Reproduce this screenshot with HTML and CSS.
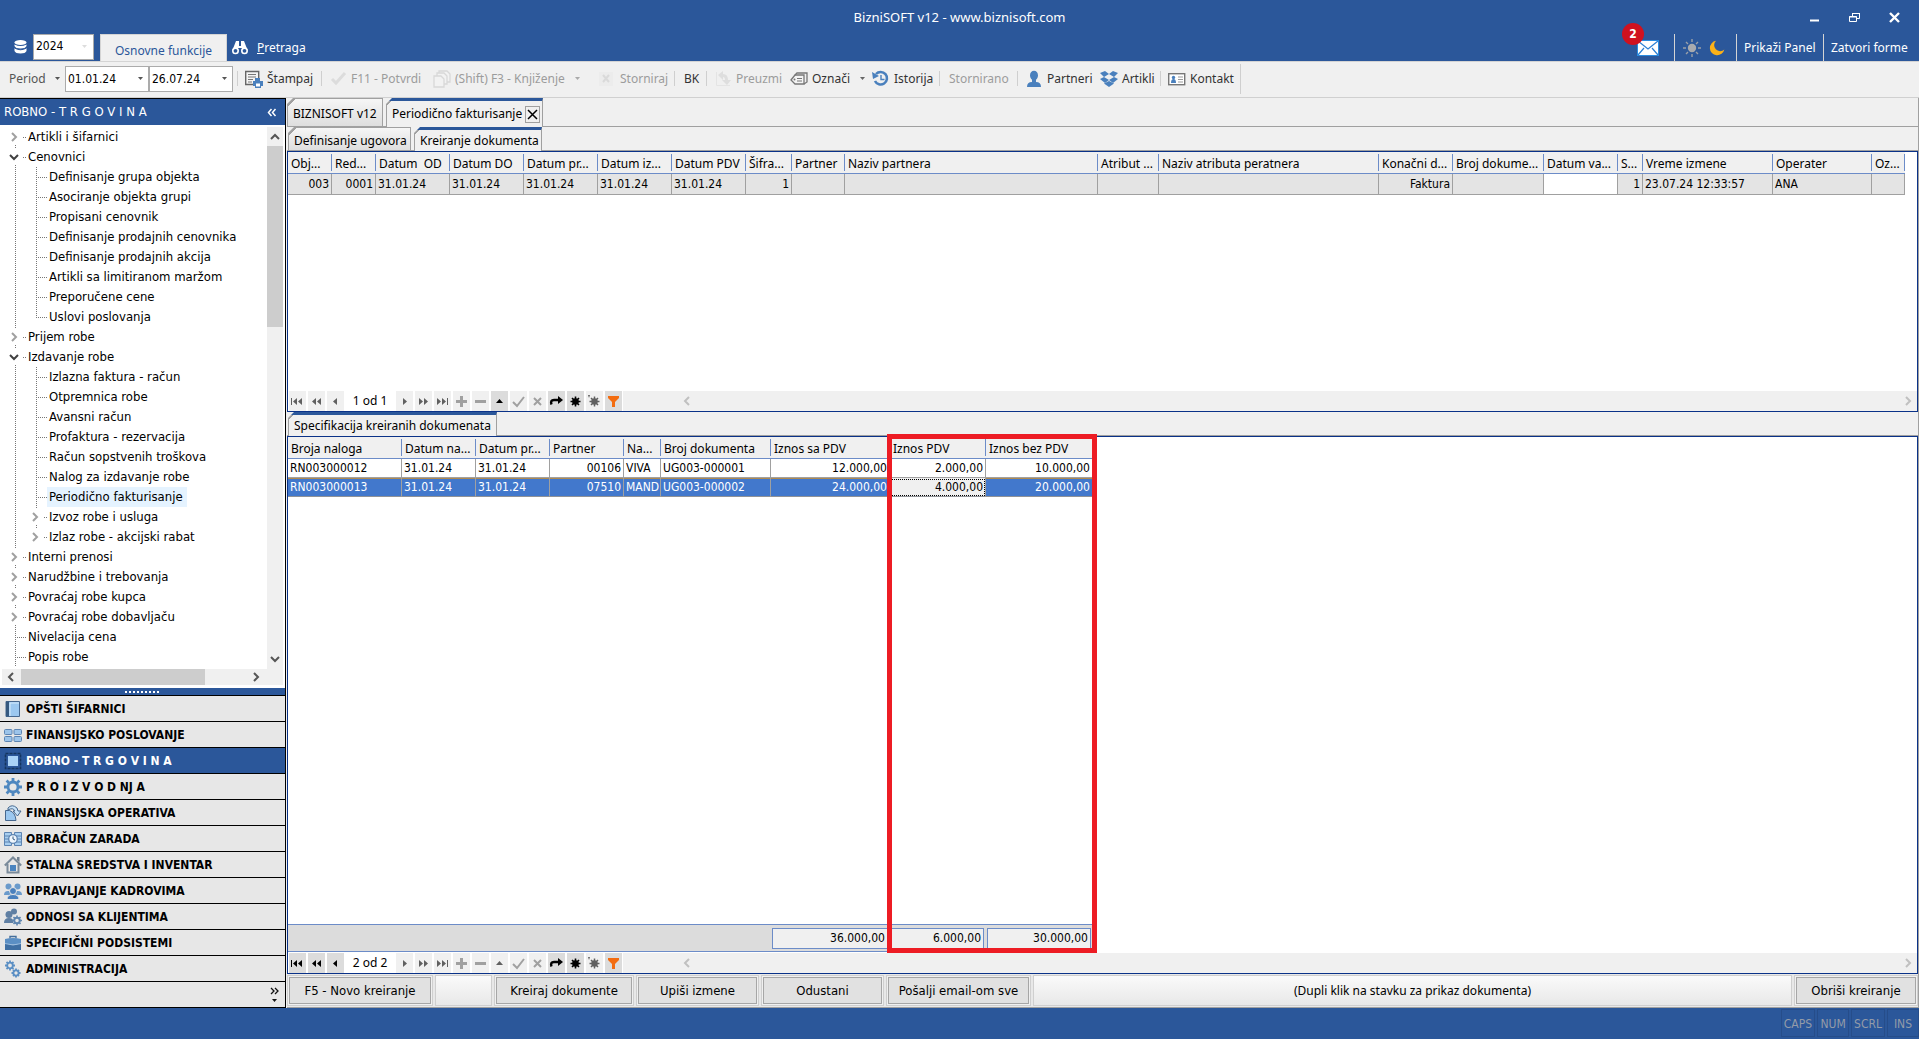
FILE: index.html
```html
<!DOCTYPE html>
<html lang="sr-Latn">
<head>
<meta charset="utf-8">
<title>BizniSOFT v12 - www.biznisoft.com</title>
<link rel="stylesheet" href="styles.css">
</head>
<body>
<svg class="sprite" aria-hidden="true">
  <symbol id="caret" viewBox="0 0 5 3"><path d="M0 0h5L2.500 3z" fill="currentColor"/></symbol>
  <symbol id="right" viewBox="0 0 10 10"><path d="M3 1l4 4-4 4" fill="none" stroke="currentColor" stroke-width="2"/></symbol>
  <symbol id="left" viewBox="0 0 10 10"><path d="M7 1L3 5l4 4" fill="none" stroke="currentColor" stroke-width="2"/></symbol>
  <symbol id="down" viewBox="0 0 10 10"><path d="M1 3l4 4 4-4" fill="none" stroke="currentColor" stroke-width="2"/></symbol>
  <symbol id="up" viewBox="0 0 10 10"><path d="M1 7l4-4 4 4" fill="none" stroke="currentColor" stroke-width="2"/></symbol>
  <symbol id="n-first" viewBox="0 0 17 19"><path d="M2 6h1v7H2zM8 6v7L4 9.500zM13 6v7L9 9.500z" fill="currentColor"/></symbol>
  <symbol id="n-pp" viewBox="0 0 17 19"><path d="M8 6v7L4 9.500zM13 6v7L9 9.500z" fill="currentColor"/></symbol>
  <symbol id="n-p" viewBox="0 0 17 19"><path d="M10 6v7L6 9.500z" fill="currentColor"/></symbol>
  <symbol id="n-n" viewBox="0 0 17 19"><path d="M7 6v7l4-3.500z" fill="currentColor"/></symbol>
  <symbol id="n-nn" viewBox="0 0 17 19"><path d="M4 6v7l4-3.500zM9 6v7l4-3.500z" fill="currentColor"/></symbol>
  <symbol id="n-last" viewBox="0 0 17 19"><path d="M3 6v7l4-3.500zM8 6v7l4-3.500zM13 6h1v7h-1z" fill="currentColor"/></symbol>
  <symbol id="n-plus" viewBox="0 0 17 19"><path d="M7 4h3v4h4v3h-4v4H7v-4H3V8h4z" fill="currentColor"/></symbol>
  <symbol id="n-minus" viewBox="0 0 17 19"><path d="M3 8h11v3H3z" fill="currentColor"/></symbol>
  <symbol id="n-up" viewBox="0 0 17 19"><path d="M5 11h7L8.500 7z" fill="currentColor"/></symbol>
  <symbol id="n-check" viewBox="0 0 17 19"><path d="M3 10l4 4 7-9" fill="none" stroke="currentColor" stroke-width="2"/></symbol>
  <symbol id="n-x" viewBox="0 0 17 19"><path d="M5 6l7 7M12 6l-7 7" fill="none" stroke="currentColor" stroke-width="2"/></symbol>
  <symbol id="n-redo" viewBox="0 0 17 19"><path d="M3.500 12.500Q2 8 6 8h5" fill="none" stroke="currentColor" stroke-width="2.400"/><path d="M10 4v8l5-4z" fill="currentColor"/></symbol>
  <symbol id="n-star" viewBox="0 0 17 19"><circle cx="8.500" cy="9.500" r="3.300" fill="currentColor"/><path d="M8.500 4.500v10M3.500 9.500h10M5 6l7 7M12 6l-7 7" stroke="currentColor" stroke-width="1.600"/></symbol>
  <symbol id="n-qstar" viewBox="0 0 17 19"><circle cx="8.500" cy="9.500" r="3.200" fill="currentColor"/><path d="M8.500 4.500v10M3.500 9.500h10M5 6l7 7M12 6l-7 7" stroke="currentColor" stroke-width="1.500"/><path d="M2 3h2L3 6z" fill="currentColor"/></symbol>
  <symbol id="n-filter" viewBox="0 0 17 19"><path d="M3 4h11v2l-4 4v5H7v-5L3 6z" fill="#f36c10"/></symbol>
</svg>

<header class="titlebar">
  <div class="title-row">
    <h1>BizniSOFT v12 - www.biznisoft.com</h1>
    <div class="win">
      <button aria-label="Minimize"><svg width="11" height="11"><path d="M1 8.500h9" stroke="#fff" stroke-width="2"/></svg></button>
      <button aria-label="Restore"><svg width="11" height="11"><path d="M3.500 4V1.500h7v5H8M3 1.500h8" fill="none" stroke="#fff"/><path d="M.5 4.500h7v5h-7zM0 5h8" fill="none" stroke="#fff"/></svg></button>
      <button aria-label="Close"><svg width="11" height="11"><path d="M1 1l9 9M10 1l-9 9" stroke="#fff" stroke-width="2.400"/></svg></button>
    </div>
  </div>
  <div class="menu-row">
    <svg class="db" width="13" height="14" viewBox="0 0 13 14"><g fill="#fff"><ellipse cx="6.500" cy="2.500" rx="6" ry="2.500"/><path d="M.5 4.500q6 3 12 0v1.500q-1 2.500-6 2.500t-6-2.500zM.5 8q6 3.500 12 0v3q-1 2.500-6 2.500T.5 11z"/></g><path d="M.5 8q6 3.500 12 0" fill="none" stroke="#2b579a"/></svg>
    <div class="year"><select aria-label="Godina"><option>2024</option></select><svg width="5" height="3"><use href="#caret"/></svg></div>
    <button class="ribbon-tab">Osnovne funkcije</button>
    <button class="search"><svg width="16" height="15" viewBox="0 0 16 15"><path d="M4 1h3v5h2V1h3l3.500 9H10V8H6v2H.5z" fill="#fff"/><circle cx="3.500" cy="10.800" r="2.700" fill="#2b579a" stroke="#fff" stroke-width="1.600"/><circle cx="12.500" cy="10.800" r="2.700" fill="#2b579a" stroke="#fff" stroke-width="1.600"/></svg><span><u>P</u>retraga</span></button>
    <div class="right-tools">
      <button class="mail" aria-label="Poruke"><svg width="22" height="16"><rect x=".5" y=".5" width="21" height="15" fill="#fff" stroke="#2a8be0"/><path d="M1 1l10 8 10-8M1 15l6-7M21 15l-6-7" fill="none" stroke="#2a7fd4" stroke-width="1.200"/></svg><span class="badge">2</span></button>
      <button class="theme light" aria-label="Svetla tema"><svg width="18" height="18" viewBox="0 0 18 18"><circle cx="9" cy="9" r="4.200" fill="#a8aaae"/><path d="M9 0v3M9 15v3M0 9h3M15 9h3M3 3l2 2M13 13l2 2M15 3l-2 2M3 15l2-2" stroke="#9aa0a8" stroke-width="1.400"/></svg></button>
      <button class="theme dark" aria-label="Tamna tema"><svg width="16" height="16" viewBox="0 0 16 16"><path d="M7 .8a7.300 7.300 0 1 0 8.300 8.700A5.800 5.800 0 0 1 7 .8z" fill="#fbb117"/></svg></button>
      <button class="txt">Prikaži Panel</button>
      <button class="txt last">Zatvori forme</button>
    </div>
  </div>
</header>

<div class="toolbar">
  <button class="period">Period<svg width="5" height="3"><use href="#caret"/></svg></button>
  <div class="date"><input aria-label="Datum od" value="01.01.24"><svg width="5" height="3"><use href="#caret"/></svg></div>
  <div class="date"><input aria-label="Datum do" value="26.07.24"><svg width="5" height="3"><use href="#caret"/></svg></div>
  <i></i>
  <button><svg width="18" height="18" viewBox="0 0 18 18"><path d="M8 14.500H.7V1.500h13v7" fill="#f4f4f4" stroke="#666" stroke-width="1.400"/><path d="M3 4.500h8M3 7h8M3 9.500h5M3 12h4" stroke="#777"/><path d="M10 8h5v3h-5zM8 11h10v5h-2v2H10v-2H8z" fill="#4a80bd"/><path d="M11 13.500h4v3h-4z" fill="#fff"/></svg>Štampaj</button>
  <i></i>
  <button disabled><svg width="18" height="18" viewBox="0 0 18 18"><path d="M3 9l4 4 9-10" fill="none" stroke="#dcdcdc" stroke-width="3"/></svg>F11 - Potvrdi</button>
  <button disabled><svg width="18" height="18" viewBox="0 0 18 18"><g fill="#f2f2f2" stroke="#d8d8d8" stroke-width="1.300"><path d="M6 1h8l3 3v8H6z"/><path d="M4 3h7l3 3v8H4z"/><path d="M1 6h7l3 3v8H1z"/></g></svg>(Shift) F3 - Knjiženje<svg class="dd" width="5" height="3"><use href="#caret"/></svg></button>
  <button disabled><svg width="18" height="18" viewBox="0 0 18 18"><path d="M1 2h14v14H1z" fill="#ececec"/><path d="M5 5l6 7M11 5l-6 7" stroke="#dadada" stroke-width="2"/></svg>Storniraj</button>
  <i></i>
  <button class="plain">BK</button>
  <i></i>
  <button disabled><svg width="18" height="18" viewBox="0 0 18 18"><path d="M2.500 2v13.500H16" fill="none" stroke="#e4e4e4"/><path d="M4 5l5-4v3q5 0 5 6h3l-4 5-5-5h3q0-3-2-3v3z" fill="#dedede"/></svg>Preuzmi</button>
  <button><svg width="18" height="18" viewBox="0 0 18 18"><path d="M1 10l4-5h9v9H5z" fill="#f4f4f4" stroke="#777" stroke-width="1.300"/><path d="M5 5l2-2h10v9l-3 2" fill="none" stroke="#777" stroke-width="1.300"/><path d="M7 8.500h5M7 11h5" stroke="#777"/><circle cx="4.500" cy="9.500" r="1" fill="#777"/></svg>Označi<svg class="dd" width="5" height="3"><use href="#caret"/></svg></button>
  <button><svg width="18" height="18" viewBox="0 0 18 18"><path d="M4 4a6.300 6.300 0 1 1-1 7" fill="none" stroke="#4a80bd" stroke-width="2.600"/><path d="M0 2l1 7 6-3z" fill="#4a80bd"/><path d="M9 5v4.500h3.500" fill="none" stroke="#4a80bd" stroke-width="1.400"/></svg>Istorija</button>
  <i></i>
  <button class="plain" disabled>Stornirano</button>
  <i></i>
  <button><svg width="18" height="18" viewBox="0 0 18 18"><ellipse cx="9" cy="5.500" rx="4" ry="4.800" fill="#4a80bd"/><path d="M7 9h4v3q5 0 5 5H2q0-5 5-5z" fill="#4a80bd"/></svg>Partneri</button>
  <button><svg width="18" height="18" viewBox="0 0 18 18"><g fill="#4a80bd"><path d="M0 3l5-2 4 3-5 3zM18 3l-5-2-4 3 5 3zM0 9l4-2 5 3-4 3zM18 9l-4-2-5 3 4 3z"/><path d="M4 13.500l5-2.500 5 2.500-5 3.500z"/></g></svg>Artikli</button>
  <i></i>
  <button><svg width="18" height="18" viewBox="0 0 18 18"><rect x=".7" y="3.700" width="16" height="11" fill="#fff" stroke="#777" stroke-width="1.400"/><circle cx="5.500" cy="7.500" r="1.700" fill="#4a80bd"/><path d="M3 13q0-4 2.500-4T8 13z" fill="#4a80bd"/><path d="M10 7h5M10 9.500h5M10 12h5" stroke="#999"/></svg>Kontakt</button>
  <i class="tall"></i>
</div>

<div class="workspace">
  <aside class="sidebar">
    <div class="side-head"><span>ROBNO - T R G O V I N A</span><button aria-label="Skupi"><svg width="10" height="9"><path d="M4.500 1L1.500 4.500l3 3.500M8.500 1l-3 3.500 3 3.500" fill="none" stroke="#fff" stroke-width="1.500"/></svg></button></div>
    <div class="tree-wrap">
      <ul class="tree">
        <li><span class="c x first"><svg width="10" height="10"><use href="#right"/></svg></span><a href="#">Artikli i šifarnici</a></li>
        <li><span class="c x o"><svg width="10" height="10"><use href="#down"/></svg></span><a href="#">Cenovnici</a></li>
        <li><span class="c v"></span><span class="c v h"></span><a href="#">Definisanje grupa objekta</a></li>
        <li><span class="c v"></span><span class="c v h"></span><a href="#">Asociranje objekta grupi</a></li>
        <li><span class="c v"></span><span class="c v h"></span><a href="#">Propisani cenovnik</a></li>
        <li><span class="c v"></span><span class="c v h"></span><a href="#">Definisanje prodajnih cenovnika</a></li>
        <li><span class="c v"></span><span class="c v h"></span><a href="#">Definisanje prodajnih akcija</a></li>
        <li><span class="c v"></span><span class="c v h"></span><a href="#">Artikli sa limitiranom maržom</a></li>
        <li><span class="c v"></span><span class="c v h"></span><a href="#">Preporučene cene</a></li>
        <li><span class="c v"></span><span class="c e"></span><a href="#">Uslovi poslovanja</a></li>
        <li><span class="c x"><svg width="10" height="10"><use href="#right"/></svg></span><a href="#">Prijem robe</a></li>
        <li><span class="c x o"><svg width="10" height="10"><use href="#down"/></svg></span><a href="#">Izdavanje robe</a></li>
        <li><span class="c v"></span><span class="c v h"></span><a href="#">Izlazna faktura - račun</a></li>
        <li><span class="c v"></span><span class="c v h"></span><a href="#">Otpremnica robe</a></li>
        <li><span class="c v"></span><span class="c v h"></span><a href="#">Avansni račun</a></li>
        <li><span class="c v"></span><span class="c v h"></span><a href="#">Profaktura - rezervacija</a></li>
        <li><span class="c v"></span><span class="c v h"></span><a href="#">Račun sopstvenih troškova</a></li>
        <li><span class="c v"></span><span class="c v h"></span><a href="#">Nalog za izdavanje robe</a></li>
        <li><span class="c v"></span><span class="c v h"></span><a href="#" class="sel">Periodično fakturisanje</a></li>
        <li><span class="c v"></span><span class="c x"><svg width="10" height="10"><use href="#right"/></svg></span><a href="#">Izvoz robe i usluga</a></li>
        <li><span class="c v"></span><span class="c x lastx"><svg width="10" height="10"><use href="#right"/></svg></span><a href="#">Izlaz robe - akcijski rabat</a></li>
        <li><span class="c x"><svg width="10" height="10"><use href="#right"/></svg></span><a href="#">Interni prenosi</a></li>
        <li><span class="c x"><svg width="10" height="10"><use href="#right"/></svg></span><a href="#">Narudžbine i trebovanja</a></li>
        <li><span class="c x"><svg width="10" height="10"><use href="#right"/></svg></span><a href="#">Povraćaj robe kupca</a></li>
        <li><span class="c x"><svg width="10" height="10"><use href="#right"/></svg></span><a href="#">Povraćaj robe dobavljaču</a></li>
        <li><span class="c v h"></span><a href="#">Nivelacija cena</a></li>
        <li><span class="c v h"></span><a href="#">Popis robe</a></li>
      </ul>
      <div class="vbar"><svg width="10" height="10"><use href="#up"/></svg><b></b><svg class="end" width="10" height="10"><use href="#down"/></svg></div>
    </div>
    <div class="hbar"><svg width="10" height="10"><use href="#left"/></svg><b></b><svg class="end" width="10" height="10"><use href="#right"/></svg></div>
    <div class="splitter"><span></span></div>
    <nav class="modules">
      <button><svg width="18" height="18" viewBox="0 0 18 18"><path d="M2 1.500h13.500v15H2z" fill="#9cc8f0" stroke="#47688f"/><path d="M2 1.500h3v15H2z" fill="#36597f"/><path d="M6 16V3h9" fill="none" stroke="#d6ebfc"/></svg>OPŠTI ŠIFARNICI</button>
      <button><svg width="18" height="18" viewBox="0 0 18 18"><g fill="#9cc4ea" stroke="#5d84b2"><rect x=".5" y="3.500" width="7.500" height="5" rx="1"/><rect x="10" y="3.500" width="7.500" height="5" rx="1"/><rect x=".5" y="10.500" width="7.500" height="5" rx="1"/><rect x="10" y="10.500" width="7.500" height="5" rx="1"/></g></svg>FINANSIJSKO POSLOVANJE</button>
      <button class="on"><svg width="18" height="18" viewBox="0 0 18 18"><rect x="1.500" y="1.500" width="15" height="15" fill="none" stroke="#14355f" stroke-dasharray="3 1" stroke-width="1.600"/><rect x="4" y="4" width="10" height="10" fill="#a9d2f7"/></svg>ROBNO - T R G O V I N A</button>
      <button><svg width="18" height="18" viewBox="0 0 18 18"><circle cx="9" cy="9" r="5" fill="none" stroke="#4f88c0" stroke-width="2.800"/><path d="M9 0v4M9 14v4M0 9h4M14 9h4M2.600 2.600l2.800 2.800M12.600 12.600l2.800 2.800M15.400 2.600l-2.800 2.800M2.600 15.400l2.800-2.800" stroke="#4f88c0" stroke-width="2.800"/></svg>P R O I Z V O D NJ A</button>
      <button><svg width="18" height="18" viewBox="0 0 18 18"><path d="M1.500 16.500v-10h4q6 2 6.500 10z" fill="#9cc8f0" stroke="#47688f"/><path d="M4 4q4-4.500 9 0l1 3h3L13.500 12 9 7h2Q9 3 4 6z" fill="#c8e2f8" stroke="#47688f"/></svg>FINANSIJSKA OPERATIVA</button>
      <button><svg width="18" height="18" viewBox="0 0 18 18"><g fill="#a9cff0" stroke="#5d84b2"><path d="M.5 2.500h7v13h-7zM10.500 2.500h7v13h-7z"/><path d="M1 6h6M1 9h6M1 12h6M11 6h6M11 9h6M11 12h6" stroke="#5d84b2"/></g><circle cx="9" cy="9" r="4.300" fill="#eef6fd" stroke="#5d84b2" stroke-width="1.300"/><path d="M9 6.500V9l2 1" fill="none" stroke="#36597f"/></svg>OBRAČUN ZARADA</button>
      <button><svg width="18" height="18" viewBox="0 0 18 18"><path d="M13 1h2.500v5L13 4z" fill="#6f7f8f"/><path d="M.8 9.500L9 1.500l8.200 8M3.500 8v8.500h11V8" fill="none" stroke="#7a8a9a" stroke-width="2"/><path d="M6 9h6v6H6z" fill="#4a84c0"/></svg>STALNA SREDSTVA I INVENTAR</button>
      <button><svg width="18" height="18" viewBox="0 0 18 18"><g fill="#6a9acb"><circle cx="4.500" cy="4.500" r="3"/><circle cx="13.500" cy="4.500" r="3"/><path d="M0 13q0-4 4-4h10q4 0 4 4z"/></g><path d="M3 17.500q0-5 6-5t6 5z" fill="#4a80bd" stroke="#e7e7e7"/><circle cx="9" cy="9" r="3.500" fill="#4a80bd" stroke="#e7e7e7"/></svg>UPRAVLJANJE KADROVIMA</button>
      <button><svg width="18" height="18" viewBox="0 0 18 18"><g fill="#5f7fa3"><circle cx="10" cy="3.500" r="3"/><circle cx="5" cy="6.500" r="3.500"/><path d="M0 15q0-5 5-5t4 5z"/></g><circle cx="13" cy="12.500" r="2.800" fill="#e7e7e7" stroke="#5f86b0" stroke-width="2"/><path d="M13 7.500v2M13 15.500v2M8 12.500h2M16 12.500h2M9.500 9l1.500 1.500M15 14.500l1.500 1.500M16.500 9L15 10.500M9.500 16l1.500-1.500" stroke="#5f86b0" stroke-width="1.600"/></svg>ODNOSI SA KLIJENTIMA</button>
      <button><svg width="18" height="18" viewBox="0 0 18 18"><path d="M6 4.500V2.500h6v2" fill="none" stroke="#456f9c" stroke-width="1.400"/><path d="M1 5q8-2 16 0v5H1z" fill="#5b8fc4"/><path d="M1 9q8 3 16 0v7H1z" fill="#3f6fa3"/><path d="M1 9.500q8 3 16 0" fill="none" stroke="#9dc0e2"/></svg>SPECIFIČNI PODSISTEMI</button>
      <button><svg width="18" height="18" viewBox="0 0 18 18"><g fill="none" stroke="#5b8fc4" stroke-width="1.800"><circle cx="6" cy="5.500" r="2.800"/><path d="M6 .5v2M6 8.500v2M1 5.500h2M9 5.500h2M2.500 2L4 3.500M8 7.500L9.500 9M9.500 2L8 3.500M2.500 9L4 7.500"/><circle cx="12" cy="13" r="2.600"/><path d="M12 8.500v2M12 15.500v2M7.500 13h2M14.500 13h2M9 10l1.500 1.500M13.500 14.500L15 16M15 10l-1.500 1.500M9 16l1.500-1.500"/></g></svg>ADMINISTRACIJA</button>
    </nav>
    <div class="more"><button aria-label="Više"><svg width="9" height="17"><path d="M1 2l3 3-3 3M5 2l3 3-3 3" fill="none" stroke="#111" stroke-width="1.300"/><path d="M2 13h5l-2.500 3z" fill="#111"/></svg></button></div>
  </aside>

  <main class="content">
    <div class="tabs outer">
      <button class="tab">BIZNISOFT v12</button>
      <div class="tab active"><button>Periodično fakturisanje</button><button class="close" aria-label="Zatvori"><svg width="11" height="11"><path d="M1 1l9 9M10 1l-9 9" stroke="#000" stroke-width="1.500"/></svg></button></div>
    </div>
    <div class="tabs inner">
      <button class="tab">Definisanje ugovora</button>
      <button class="tab active">Kreiranje dokumenta</button>
    </div>
    <section class="grid upper">
      <div class="grid-body">
        <table class="t1">
          <colgroup><col class="w44"><col class="w44"><col class="w74"><col class="w74"><col class="w74"><col class="w74"><col class="w74"><col class="w46"><col class="w53"><col class="w253"><col class="w61"><col class="w220"><col class="w74"><col class="w91"><col class="w74"><col class="w25"><col class="w130"><col class="w99"><col class="w33"></colgroup>
          <thead><tr><th>Obj...</th><th>Red...</th><th>Datum&nbsp; OD</th><th>Datum DO</th><th>Datum pr...</th><th>Datum iz...</th><th>Datum PDV</th><th>Šifra...</th><th>Partner</th><th>Naziv partnera</th><th>Atribut ...</th><th>Naziv atributa peratnera</th><th>Konačni d...</th><th>Broj dokume...</th><th>Datum va...</th><th>S...</th><th>Vreme izmene</th><th>Operater</th><th>Oz...</th></tr></thead>
          <tbody><tr><td class="r">003</td><td class="r">0001</td><td>31.01.24</td><td>31.01.24</td><td>31.01.24</td><td>31.01.24</td><td>31.01.24</td><td class="r">1</td><td></td><td></td><td></td><td></td><td class="r">Faktura</td><td></td><td class="edit"></td><td class="r">1</td><td>23.07.24 12:33:57</td><td>ANA</td><td></td></tr></tbody>
        </table>
      </div>
      <div class="navigator">
        <button aria-label="Prvi"><svg><use href="#n-first"/></svg></button>
        <button aria-label="Prethodna strana"><svg><use href="#n-pp"/></svg></button>
        <button aria-label="Prethodni"><svg><use href="#n-p"/></svg></button>
        <span>1 od 1</span>
        <button aria-label="Sledeći"><svg><use href="#n-n"/></svg></button>
        <button aria-label="Sledeća strana"><svg><use href="#n-nn"/></svg></button>
        <button aria-label="Poslednji"><svg><use href="#n-last"/></svg></button>
        <button class="dim" aria-label="Dodaj"><svg><use href="#n-plus"/></svg></button>
        <button class="dim" aria-label="Obriši"><svg><use href="#n-minus"/></svg></button>
        <button class="live" aria-label="Izmeni"><svg><use href="#n-up"/></svg></button>
        <button class="dim" aria-label="Potvrdi"><svg><use href="#n-check"/></svg></button>
        <button class="dim" aria-label="Otkaži"><svg><use href="#n-x"/></svg></button>
        <button class="live" aria-label="Osveži"><svg><use href="#n-redo"/></svg></button>
        <button class="live" aria-label="Obeleži"><svg><use href="#n-star"/></svg></button>
        <button aria-label="Idi na obeleženo"><svg><use href="#n-qstar"/></svg></button>
        <button class="live" aria-label="Filter"><svg><use href="#n-filter"/></svg></button>
        <div class="scroll"><svg width="10" height="10"><use href="#left"/></svg><svg width="10" height="10"><use href="#right"/></svg></div>
      </div>
    </section>
    <div class="tabs spec"><button class="tab active">Specifikacija kreiranih dokumenata</button></div>
    <section class="grid lower">
      <div class="grid-body">
        <table class="t2">
          <colgroup><col class="w114"><col class="w74"><col class="w74"><col class="w74"><col class="w37"><col class="w110"><col class="w119"><col class="w96"><col class="w107"></colgroup>
          <thead><tr><th>Broja naloga</th><th>Datum na...</th><th>Datum pr...</th><th>Partner</th><th>Na...</th><th>Broj dokumenta</th><th>Iznos sa PDV</th><th>Iznos PDV</th><th>Iznos bez PDV</th></tr></thead>
          <tbody>
            <tr><td>RN003000012</td><td>31.01.24</td><td>31.01.24</td><td class="r">00106</td><td>VIVA</td><td>UG003-000001</td><td class="r">12.000,00</td><td class="r">2.000,00</td><td class="r">10.000,00</td></tr>
            <tr class="picked"><td>RN003000013</td><td>31.01.24</td><td>31.01.24</td><td class="r">07510</td><td>MAND</td><td>UG003-000002</td><td class="r">24.000,00</td><td class="r focus">4.000,00</td><td class="r">20.000,00</td></tr>
          </tbody>
        </table>
        <div class="totals"><span>36.000,00</span><span>6.000,00</span><span>30.000,00</span></div>
        <div class="mark"></div>
      </div>
      <div class="navigator">
        <button class="live" aria-label="Prvi"><svg><use href="#n-first"/></svg></button>
        <button class="live" aria-label="Prethodna strana"><svg><use href="#n-pp"/></svg></button>
        <button class="live" aria-label="Prethodni"><svg><use href="#n-p"/></svg></button>
        <span>2 od 2</span>
        <button aria-label="Sledeći"><svg><use href="#n-n"/></svg></button>
        <button aria-label="Sledeća strana"><svg><use href="#n-nn"/></svg></button>
        <button aria-label="Poslednji"><svg><use href="#n-last"/></svg></button>
        <button class="dim" aria-label="Dodaj"><svg><use href="#n-plus"/></svg></button>
        <button class="dim" aria-label="Obriši"><svg><use href="#n-minus"/></svg></button>
        <button aria-label="Izmeni"><svg><use href="#n-up"/></svg></button>
        <button class="dim" aria-label="Potvrdi"><svg><use href="#n-check"/></svg></button>
        <button class="dim" aria-label="Otkaži"><svg><use href="#n-x"/></svg></button>
        <button class="live" aria-label="Osveži"><svg><use href="#n-redo"/></svg></button>
        <button class="live" aria-label="Obeleži"><svg><use href="#n-star"/></svg></button>
        <button aria-label="Idi na obeleženo"><svg><use href="#n-qstar"/></svg></button>
        <button class="live" aria-label="Filter"><svg><use href="#n-filter"/></svg></button>
        <div class="scroll"><svg width="10" height="10"><use href="#left"/></svg><svg width="10" height="10"><use href="#right"/></svg></div>
      </div>
    </section>
    <div class="actions">
      <div><button>F5 - Novo kreiranje</button></div>
      <div class="blank"></div>
      <div><button>Kreiraj dokumente</button></div>
      <div><button>Upiši izmene</button></div>
      <div><button>Odustani</button></div>
      <div><button>Pošalji email-om sve</button></div>
      <p class="blank">(Dupli klik na stavku za prikaz dokumenta)</p>
      <div><button>Obriši kreiranje</button></div>
    </div>
  </main>
</div>

<footer class="status"><span>CAPS</span><span>NUM</span><span>SCRL</span><span>INS</span></footer>
</body>
</html>
```
FILE: styles.css
```css
:root {
  --blue: #2b579a;
  --face: #f0f0f0;
  --navy: #0a3288;
  --rule: #6c8cc8;
  --ui: "DejaVu Sans Condensed", "DejaVu Sans", sans-serif;
  --data: "Noto Sans", sans-serif;
}
* { box-sizing: border-box; }
body { margin: 0; min-height: 100vh; display: flex; flex-direction: column; background: var(--face); color: #000; font: 12px/16px var(--data); }
button, input, select { font: inherit; color: inherit; border: 0; padding: 0; margin: 0; background: none; border-radius: 0; white-space: nowrap; }
svg { flex: none; display: block; }
h1, p, ul { margin: 0; padding: 0; font: inherit; }
.sprite { position: absolute; width: 0; height: 0; }

/* title bar */
.titlebar { background: var(--blue); color: #fff; }
.title-row { display: grid; grid-template-columns: 1fr auto 1fr; height: 34px; align-items: center; }
.title-row h1 { grid-column: 2; font: 13px/16px var(--data); }
.win { display: flex; justify-content: flex-end; gap: 29px; padding-right: 19px; }
.menu-row { display: flex; height: 27px; align-items: stretch; padding-left: 14px; }
.db { margin: 6px 6px 0 0; }
.year { width: 61px; height: 26px; display: flex; align-items: center; background: #fff; border: 1px solid #ababab; color: #000; padding: 0 6px 2px 0; }
.year select { flex: 1; min-width: 0; appearance: none; height: 22px; padding-left: 2px; font-family: var(--ui); }
.year svg { color: #ddd; }
.ribbon-tab { width: 127px; margin-left: 6px; background: var(--face); color: var(--blue); border: 1px solid #d4d4d4; border-bottom: 0; padding-top: 5px; }
.search { display: flex; align-items: center; gap: 9px; margin-left: 5px; }
.right-tools { display: flex; margin-left: auto; }
.mail { position: relative; width: 37px; display: flex; align-items: center; }
.badge { position: absolute; left: -15px; top: -11px; width: 22px; height: 22px; border-radius: 50%; background: #d0111f; font: bold 12px/22px var(--ui); text-align: center; }
.theme { display: grid; place-items: center; }
.theme.light { border-left: 1px solid #d4d4d4; width: 35px; }
.theme.dark { width: 27px; justify-items: start; }
.txt { border-left: 1px solid #d4d4d4; padding: 0 7px; width: 87px; text-align: left; }
.txt.last { width: 96px; }

/* ribbon commands */
.toolbar { display: grid; grid-template-columns: 56px 84px 84px 8px 76px 8px 104px 165px 76px 8px 24px 8px 76px 82px 67px 8px 70px 8px 75px 60px 8px 72px 8px; height: 37px; padding: 0 0 2px 9px; align-items: center; border-top: 1px solid #d4d4d4; border-bottom: 1px solid #d0d0d0; color: #333; overflow: hidden; }
.toolbar button { display: flex; align-items: center; gap: 4px; padding-left: 4px; height: 24px; }
.toolbar button:disabled { color: #9c9c9c; }
.toolbar .period { padding: 0; gap: 9px; color: #555; }
.toolbar .plain { padding-left: 6px; }
.toolbar .dd { margin-left: 6px; color: #666; }
.toolbar button:disabled .dd { color: #aaa; }
.toolbar i { width: 1px; height: 15px; background: #cfcfcf; justify-self: center; }
.toolbar i.tall { height: 30px; }
.date { display: flex; align-items: center; height: 26px; background: #fff; border: 1px solid #ababab; color: #555; padding-right: 5px; }
.date input { flex: 1; min-width: 0; padding-left: 2px; color: #000; outline: 0; font-family: var(--ui); }

/* sidebar */
.workspace { flex: 1; display: flex; min-height: 0; }
.sidebar { width: 286px; flex: none; display: flex; flex-direction: column; border: solid #000; border-width: 1px 1px 0 0; background: #fff; font: 13px/16px var(--ui); }
.side-head { display: flex; justify-content: space-between; align-items: center; height: 26px; background: var(--blue); color: #fff; padding: 0 8px 0 4px; }
.tree-wrap { flex: 1; display: flex; padding: 2px 2px 0 0; }
.tree { flex: 1; list-style: none; padding-left: 5px; overflow: hidden; }
.tree li { display: flex; height: 20px; }
.tree a { color: #000; text-decoration: none; padding: 0 4px 0 2px; line-height: 20px; white-space: nowrap; }
.tree .sel { background: #e5f3ff; }
.c { --v: repeating-linear-gradient(#777 0 1px, transparent 1px 2px); --h: repeating-linear-gradient(90deg, #777 0 1px, transparent 1px 2px); width: 21px; flex: none; background-repeat: no-repeat; }
.c.v { background: var(--v) 10px 0 / 1px 100% no-repeat; }
.c.v.h { background: var(--v) 10px 0 / 1px 100% no-repeat, var(--h) 12px 10px / 9px 1px no-repeat; }
.c.e { background: var(--v) 10px 0 / 1px 11px no-repeat, var(--h) 12px 10px / 9px 1px no-repeat; }
.c.x { background: var(--v) 10px 0 / 1px 2px no-repeat, var(--v) 10px 18px / 1px 2px no-repeat, var(--h) 18px 10px / 3px 1px no-repeat; color: #a0a0a0; padding: 5px 0 0 4px; }
.c.first { background: var(--v) 10px 18px / 1px 2px no-repeat, var(--h) 18px 10px / 3px 1px no-repeat; }
.c.lastx { background: var(--v) 10px 0 / 1px 2px no-repeat, var(--h) 18px 10px / 3px 1px no-repeat; }
.c.o { color: #404040; }
.vbar { width: 16px; background: var(--face); display: flex; flex-direction: column; align-items: center; color: #555; padding: 5px 0; }
.vbar b { width: 16px; height: 181px; background: #cdcdcd; margin-top: 4px; }
.vbar .end { margin-top: auto; }
.hbar { display: flex; align-items: center; height: 16px; margin: 0 2px 3px; background: var(--face); color: #555; padding: 0 22px 0 4px; }
.hbar b { width: 184px; height: 16px; background: #cdcdcd; margin-left: 5px; }
.hbar .end { margin-left: auto; }
.splitter { height: 7px; background: var(--blue); display: grid; place-items: center; }
.splitter span { width: 35px; height: 2px; background: repeating-linear-gradient(90deg, #fff 0 2px, transparent 2px 4px); }
.modules { border-top: 1px solid #000; }
.modules button { display: flex; align-items: center; gap: 4px; width: 100%; height: 26px; padding-left: 4px; background: #e7e7e7; border-bottom: 1px solid #000; font: bold 12px/16px var(--ui); }
.modules .on { background: var(--blue); color: #fff; }
.more { height: 26px; background: #e7e7e7; border-bottom: 1px solid #000; display: flex; justify-content: flex-end; align-items: center; padding-right: 6px; }

/* tabs */
.content { flex: 1; min-width: 0; display: flex; flex-direction: column; padding-left: 1px; border-right: 1px solid #a0a0a0; }
.tabs { display: flex; gap: 3px; border-bottom: 1px solid #a0a0a0; }
.tabs.outer { height: 29px; }
.tabs.inner, .tabs.spec { height: 24px; padding-left: 1px; }
.tab { display: flex; align-items: center; padding: 3px 4px 0 5px; border: 1px solid #a0a0a0; border-width: 1px 1px 0 1px; background: linear-gradient(135deg, #a0a0a0 5px, transparent 5px), linear-gradient(#f6f6f6, #dedede); clip-path: polygon(6px 0, 100% 0, 100% 100%, 0 100%, 0 6px); }
.tab.active { margin-bottom: -1px; padding-top: 0; border-top: 3px solid var(--blue); background: linear-gradient(135deg, #a0a0a0 3px, transparent 3px), var(--face); }
.outer .tab { width: 96px; }
.outer .tab.active { width: 157px; justify-content: space-between; padding-right: 2px; }
.close { width: 15px; height: 17px; display: grid; place-items: center; border: 1px solid #a0a0a0; }
.inner .tab { width: 123px; }
.inner .tab.active { width: 128px; }
.spec .tab { width: 209px; }

/* data grids */
.grid { display: flex; flex-direction: column; background: #fff; border: 1px solid var(--navy); }
.upper { flex: none; height: 261px; }
.lower { flex: 1; }
.grid-body { flex: 1; position: relative; display: flex; flex-direction: column; }
table { table-layout: fixed; border-collapse: separate; border-spacing: 0; }
.t1 { width: 1617px; }
.t2 { width: 805px; }
.w25 { width: 25px; } .w33 { width: 33px; } .w37 { width: 37px; } .w44 { width: 44px; } .w46 { width: 46px; }
.w53 { width: 53px; } .w61 { width: 61px; } .w74 { width: 74px; } .w91 { width: 91px; } .w96 { width: 96px; }
.w99 { width: 99px; } .w107 { width: 107px; } .w110 { width: 110px; } .w114 { width: 114px; } .w119 { width: 119px; }
.w130 { width: 130px; } .w220 { width: 220px; } .w253 { width: 253px; }
th { height: 22px; padding: 2px 0 0 3px; font-weight: 400; text-align: left; white-space: nowrap; overflow: hidden; border-bottom: 1px solid var(--rule); background: linear-gradient(var(--rule), var(--rule)) right 2px / 1px 17px no-repeat, var(--face); }
td { height: 19px; padding: 1px 0 0 2px; font-family: var(--ui); line-height: 17px; white-space: nowrap; overflow: hidden; border: solid #a0a0a0; border-width: 0 1px 1px 0; }
.t1 td { height: 21px; background: #e4e4e4; }
.t1 .edit { background: #fff; }
td.r { text-align: right; padding-right: 2px; }
.picked td { background: #4278cc; color: #fff; box-shadow: inset 0 1px #b08a50; border-bottom-color: #8f9297; }
.picked td.focus { background: var(--face); color: #000; box-shadow: none; outline: 1px dotted #000; outline-offset: -2px; }
.totals { display: grid; grid-template-columns: 116px 93px 104px; gap: 3px; justify-content: end; width: 805px; height: 28px; margin: auto 0 1px; padding: 3px 2px 3px 0; background: #dcdcdc; border: solid var(--rule); border-width: 1px 0; font-family: var(--ui); }
.totals span { border: 1px solid var(--rule); background: var(--face); line-height: 19px; text-align: right; padding-right: 2px; }
.mark { position: absolute; left: 599px; top: -3px; bottom: 0; width: 210px; border: 5px solid #ed1c24; pointer-events: none; }
.navigator { display: flex; gap: 2px; height: 20px; padding-left: 1px; }
.navigator button { width: 17px; background: var(--face); color: #606060; }
.navigator svg { width: 17px; height: 19px; }
.navigator .dim { color: #a0a0a0; }
.navigator .live { background: #dcdcdc; color: #000; }
.navigator span { width: 48px; line-height: 19px; text-align: center; }
.navigator .scroll { flex: 1; display: flex; justify-content: space-between; align-items: center; margin-left: -1px; padding: 0 4px 0 59px; background: var(--face); color: #c0c0c0; }
.navigator .scroll svg { width: 10px; height: 10px; }

/* bottom actions */
.actions { display: grid; grid-template-columns: 146px 57px 140px 123px 123px 145px 1fr 124px; gap: 2px; height: 34px; padding: 1px 0; border-bottom: 1px solid #a0a0a0; background: #e8e8e8; font: 13px/16px var(--ui); }
.actions > * { display: grid; border: 1px solid #cfcfcf; padding: 1px; background: var(--face); }
.actions button { border: 1px solid #a6a6a6; background: #e1e1e1; }
.actions > .blank { background: linear-gradient(#fafafa, #e8e8e8); align-items: center; text-align: center; font: 12px/16px var(--data); }

/* status bar */
.status { display: flex; justify-content: flex-end; gap: 2px; height: 31px; padding: 1px 0 2px; background: var(--blue); color: #939ba8; font-family: var(--ui); }
.status span { line-height: 28px; border: 1px solid #264d8a; text-align: center; padding: 0 2px; min-width: 32px; }
```
